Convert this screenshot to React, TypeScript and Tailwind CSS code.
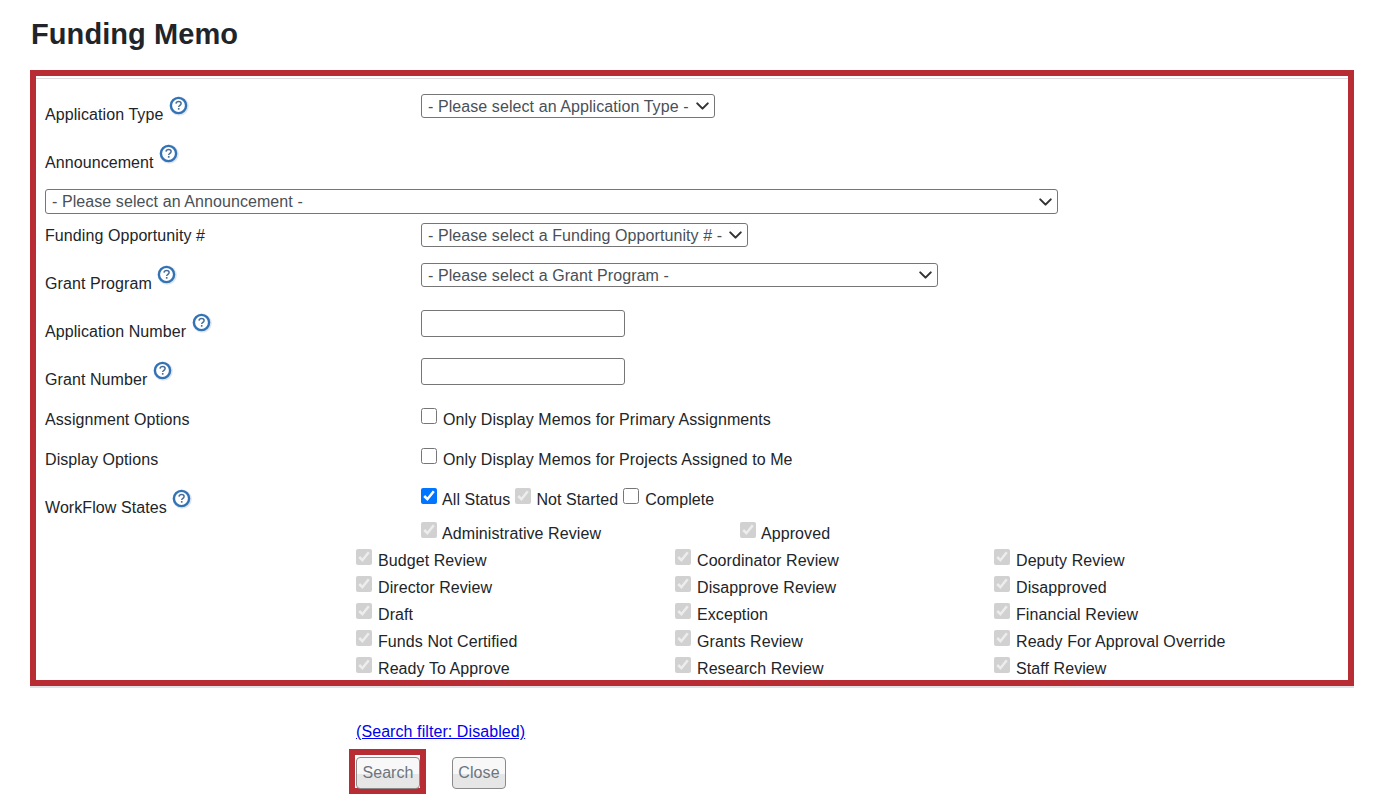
import { ChevronDown } from "lucide-react";

const stateRows = [
  ["Budget Review", "Coordinator Review", "Deputy Review"],
  ["Director Review", "Disapprove Review", "Disapproved"],
  ["Draft", "Exception", "Financial Review"],
  ["Funds Not Certified", "Grants Review", "Ready For Approval Override"],
  ["Ready To Approve", "Research Review", "Staff Review"],
];

function HelpIcon() {
  return (
    <svg width="20" height="20" viewBox="0 0 20 20" className="mb-[19px] ml-[5.5px] shrink-0">
      <circle cx="10.2" cy="10.2" r="9.6" fill="#c9d6e6" opacity="0.6" />
      <circle cx="9.5" cy="9.5" r="7.6" fill="#fff" stroke="#3373b5" strokeWidth="2.4" />
      <path
        d="M7 7.6c.2-1.4 1.2-2.1 2.6-2.1 1.5 0 2.5.8 2.5 2 0 1-.6 1.5-1.4 2-.7.5-1 .8-1 1.6"
        fill="none"
        stroke="#4a6d96"
        strokeWidth="1.5"
      />
      <rect x="8.9" y="12" width="1.6" height="1.7" fill="#4a6d96" />
    </svg>
  );
}

function FieldLabel({ text, help }: { text: string; help?: boolean }) {
  return (
    <div className="flex w-[376px] shrink-0 items-center self-stretch pt-[2px]">
      <span>{text}</span>
      {help && <HelpIcon />}
    </div>
  );
}

function Picker({ text, className }: { text: string; className: string }) {
  return (
    <div className={`relative h-6 ${className}`}>
      <select className="h-full w-full appearance-none rounded-[3px] border border-[#767676] bg-white pl-[6px] text-[#495057]">
        <option>{text}</option>
      </select>
      <ChevronDown size={21} strokeWidth={2.4} className="pointer-events-none absolute top-1/2 right-[2px] -translate-y-1/2 text-[#333]" />
    </div>
  );
}

function Check({
  label,
  checked,
  disabled,
  gap = "ml-[6px]",
}: {
  label: string;
  checked?: boolean;
  disabled?: boolean;
  gap?: string;
}) {
  return (
    <label className="flex items-center">
      <input type="checkbox" defaultChecked={checked} disabled={disabled} className="mb-[6px] h-4 w-4" />
      <span className={`pt-[2px] ${gap}`}>{label}</span>
    </label>
  );
}

function TextBox() {
  return <input type="text" className="mt-[3px] h-[27px] w-[204px] self-start rounded-[3px] border border-[#767676] bg-white" />;
}

export default function App() {
  return (
    <div className="h-[797px] overflow-hidden bg-white px-[30px] pt-4 font-['Liberation_Sans',Arial,sans-serif] text-base tracking-[0.08px] text-[#212529]">
      <h1 className="pl-px text-[29px] leading-[37px] font-bold tracking-[0.08px]">Funding Memo</h1>

      <div className="mt-[17px] border-b-2 border-[#dfe3e6]">
        <div className="h-[616px] border-[6px] border-[#b72d33]">
          <div className="mt-[2px] h-[600px] border-t border-[#dddddd] pl-[9px]">
            <div className="mt-[11px] flex h-12">
              <FieldLabel text="Application Type" help />
              <Picker text="- Please select an Application Type -" className="mt-1 w-[294px]" />
            </div>
            <div className="flex h-12">
              <FieldLabel text="Announcement" help />
            </div>
            <Picker text="- Please select an Announcement -" className="mt-[3px] h-[25px] w-[1013px]" />
            <div className="mt-[9px] flex h-6">
              <FieldLabel text="Funding Opportunity #" />
              <Picker text="- Please select a Funding Opportunity # -" className="w-[327px]" />
            </div>
            <div className="mt-3 flex h-12">
              <FieldLabel text="Grant Program" help />
              <Picker text="- Please select a Grant Program -" className="mt-1 w-[517px]" />
            </div>
            <div className="flex h-12">
              <FieldLabel text="Application Number" help />
              <TextBox />
            </div>
            <div className="flex h-12">
              <FieldLabel text="Grant Number" help />
              <TextBox />
            </div>
            <div className="flex h-8">
              <FieldLabel text="Assignment Options" />
              <Check label="Only Display Memos for Primary Assignments" />
            </div>
            <div className="mt-2 flex h-8">
              <FieldLabel text="Display Options" />
              <Check label="Only Display Memos for Projects Assigned to Me" />
            </div>
            <div className="mt-2 flex">
              <div className="flex h-12 w-[376px] shrink-0 items-center pt-[2px]">
                <span>WorkFlow States</span>
                <HelpIcon />
              </div>
              <div>
                <div className="flex h-8 gap-[4px]">
                  <Check label="All Status" checked gap="ml-[5px] pr-px" />
                  <Check label="Not Started" checked disabled gap="ml-[5px] pr-px" />
                  <Check label="Complete" gap="ml-[6px]" />
                </div>
                <div className="mt-[2px] flex h-8">
                  <div className="flex w-[319px]">
                    <Check label="Administrative Review" checked disabled gap="ml-[5px]" />
                  </div>
                  <Check label="Approved" checked disabled gap="ml-[5px]" />
                </div>
              </div>
            </div>
            <div className="-mt-[3px] ml-[311px] grid grid-cols-[319px_319px_1fr]">
              {stateRows.flat().map((name) => (
                <div key={name} className="flex h-[27px]">
                  <Check label={name} checked disabled />
                </div>
              ))}
            </div>
          </div>
        </div>
      </div>

      <div className="ml-[326px] mt-8">
        <a href="#" className="text-[#0000ee] underline">
          (Search filter: Disabled)
        </a>
        <div className="-ml-[7px] mt-[5px] flex items-start">
          <div className="h-[45px] border-[6px] border-[#b72d33] pl-px pt-[2px]">
            <button className="h-8 w-[64px] rounded-[4px] border border-[#8a8a8a] bg-[linear-gradient(#f8f8f8_55%,#e6e6e6_55%)] text-[#6c757d]">
              Search
            </button>
          </div>
          <button className="ml-[26px] mt-2 h-8 w-[54px] rounded-[4px] border border-[#8a8a8a] bg-[linear-gradient(#f8f8f8_55%,#e6e6e6_55%)] text-[#6c757d]">
            Close
          </button>
        </div>
      </div>
    </div>
  );
}
